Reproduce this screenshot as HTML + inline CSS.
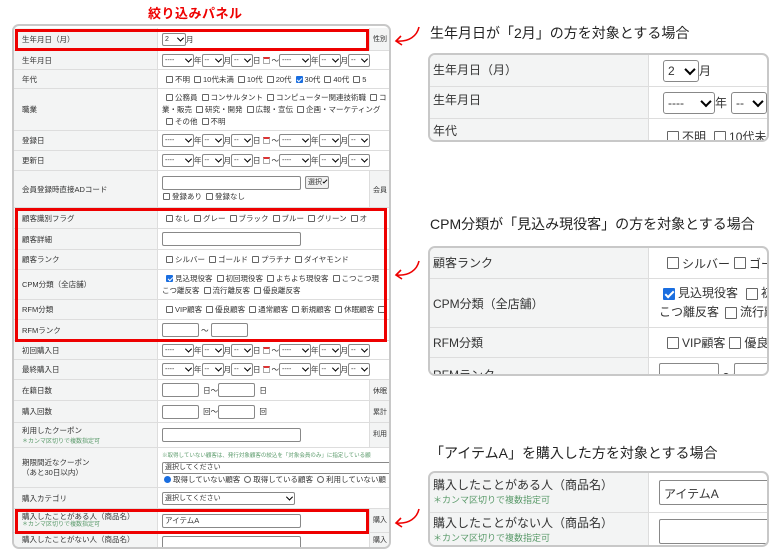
<!DOCTYPE html>
<html><head><meta charset="utf-8">
<style>
*{box-sizing:border-box;margin:0;padding:0}
body{width:780px;height:552px;background:#fff;position:relative;overflow:hidden;font-family:"Liberation Sans","Noto Sans CJK JP",sans-serif;color:#333}
.abs{position:absolute}
.panel{position:absolute;border:2px solid #c8c8c8;border-radius:7px;overflow:hidden;background:#fff}
.row{position:absolute;left:0;right:0;border-bottom:1px solid #ddd;display:flex}
.lab{background:#f3f4f4;border-right:1px solid #ddd;height:100%;display:flex;flex-direction:column;justify-content:center;flex:none}
.val{flex:1;display:flex;flex-direction:column;justify-content:center;overflow:hidden;white-space:nowrap}
.L .lab{width:144px;padding-left:8px;font-size:7.5px}
.L .val{padding-left:4px;font-size:7.5px}
.line{display:flex;align-items:center;white-space:nowrap}
.sel{display:inline-flex;align-items:center;justify-content:space-between;border:1px solid #888;border-radius:2px;background:#fff;height:13px;padding:0 2px;font-size:7px;flex:none}
.sel:after{content:"";width:4px;height:4px;border-right:1.3px solid #000;border-bottom:1.3px solid #000;transform:rotate(45deg) translate(-1px,-1px);margin-left:2px}
.inp{display:inline-block;border:1px solid #888;border-radius:2px;background:#fff;height:14px;flex:none}
.cb{display:inline-block;width:7px;height:7px;border:1px solid #666;border-radius:1px;margin:0 2px 0 4px;flex:none;vertical-align:middle}
.cb.on{background:#1a6ee0;border-color:#1a6ee0;position:relative}
.cb.on:after{content:"";position:absolute;left:1.5px;top:0;width:2px;height:4px;border-right:1.2px solid #fff;border-bottom:1.2px solid #fff;transform:rotate(45deg)}
.cal{display:inline-block;width:7px;height:7px;border:1px solid #aaa;border-top:2px solid #d33;margin:0 2px;flex:none}
.note{color:#5a9a6a;font-size:6px}
.red{position:absolute;border:3px solid #e00}
.R .lab{width:219px;padding-left:3px;font-size:12px}
.R .val{padding-left:14px;font-size:12px}
.R .sel{height:22px;font-size:12px;padding:0 4px;border-radius:3px}
.R .sel:after{width:6px;height:6px;border-width:2px}
.R .cb{width:12px;height:12px;margin:0 3px 0 4px}
.R .cb.on:after{left:3px;top:0;width:3px;height:7px;border-width:2px}
.title{position:absolute;font-size:14px;color:#222;white-space:nowrap}
.sc{position:absolute;right:0;top:0;bottom:0;width:20px;background:#f3f4f4;border-left:1px solid #ddd;font-size:7px;padding:6px 0 0 3px;overflow:hidden;white-space:nowrap}
</style></head><body>

<div class="abs" style="left:148px;top:3px;color:#e00;font-weight:bold;font-size:13px;letter-spacing:0.5px">絞り込みパネル</div>

<div class="panel L" style="left:12px;top:24px;width:379px;height:525px">
<div class="row" style="top:2px;height:23px"><div class="lab">生年月日（月）</div><div class="val"><div class="line"><span class="sel" style="width:24px">2</span>月</div></div><div class="sc">性別</div></div>
<div class="row" style="top:25px;height:19px"><div class="lab">生年月日</div><div class="val"><div class="line"><span class="sel" style="width:32px">----</span>年<span class="sel" style="width:22px">--</span>月<span class="sel" style="width:22px">--</span>日<span class="cal"></span>～<span class="sel" style="width:32px">----</span>年<span class="sel" style="width:22px">--</span>月<span class="sel" style="width:22px">--</span></div></div></div>
<div class="row" style="top:44px;height:19px"><div class="lab">年代</div><div class="val"><div class="line"><span class="cb"></span>不明<span class="cb"></span>10代未満<span class="cb"></span>10代<span class="cb"></span>20代<span class="cb on"></span>30代<span class="cb"></span>40代<span class="cb"></span>5</div></div></div>
<div class="row" style="top:63px;height:42px"><div class="lab">職業</div><div class="val" style="line-height:12px"><div class="line"><span class="cb"></span>公務員<span class="cb"></span>コンサルタント<span class="cb"></span>コンピューター関連技術職<span class="cb"></span>コ</div><div class="line">業・販売<span class="cb"></span>研究・開発<span class="cb"></span>広報・宣伝<span class="cb"></span>企画・マーケティング</div><div class="line"><span class="cb"></span>その他<span class="cb"></span>不明</div></div></div>
<div class="row" style="top:105px;height:20px"><div class="lab">登録日</div><div class="val"><div class="line"><span class="sel" style="width:32px">----</span>年<span class="sel" style="width:22px">--</span>月<span class="sel" style="width:22px">--</span>日<span class="cal"></span>～<span class="sel" style="width:32px">----</span>年<span class="sel" style="width:22px">--</span>月<span class="sel" style="width:22px">--</span></div></div></div>
<div class="row" style="top:125px;height:20px"><div class="lab">更新日</div><div class="val"><div class="line"><span class="sel" style="width:32px">----</span>年<span class="sel" style="width:22px">--</span>月<span class="sel" style="width:22px">--</span>日<span class="cal"></span>～<span class="sel" style="width:32px">----</span>年<span class="sel" style="width:22px">--</span>月<span class="sel" style="width:22px">--</span></div></div></div>
<div class="row" style="top:145px;height:37px"><div class="lab">会員登録時直接ADコード</div><div class="val" style="line-height:13px"><div class="line"><span class="inp" style="width:139px"></span><span class="sel" style="width:24px;margin-left:4px;background:#f0f0f0;justify-content:center">選択</span></div><div class="line"><span class="cb" style="margin-left:1px"></span>登録あり<span class="cb"></span>登録なし</div></div><div class="sc" style="width:20px;padding-top:14px">会員</div></div>
<div class="row" style="top:182px;height:21px"><div class="lab">顧客識別フラグ</div><div class="val"><div class="line"><span class="cb"></span>なし<span class="cb"></span>グレー<span class="cb"></span>ブラック<span class="cb"></span>ブルー<span class="cb"></span>グリーン<span class="cb"></span>オ</div></div></div>
<div class="row" style="top:203px;height:21px"><div class="lab">顧客詳細</div><div class="val"><span class="inp" style="width:139px"></span></div></div>
<div class="row" style="top:224px;height:20px"><div class="lab">顧客ランク</div><div class="val"><div class="line"><span class="cb"></span>シルバー<span class="cb"></span>ゴールド<span class="cb"></span>プラチナ<span class="cb"></span>ダイヤモンド</div></div></div>
<div class="row" style="top:244px;height:30px"><div class="lab">CPM分類（全店舗）</div><div class="val" style="line-height:12px"><div class="line"><span class="cb on"></span>見込現役客<span class="cb"></span>初回現役客<span class="cb"></span>よちよち現役客<span class="cb"></span>こつこつ現</div><div class="line">こつ離反客<span class="cb"></span>流行離反客<span class="cb"></span>優良離反客</div></div></div>
<div class="row" style="top:274px;height:20px"><div class="lab">RFM分類</div><div class="val"><div class="line"><span class="cb"></span>VIP顧客<span class="cb"></span>優良顧客<span class="cb"></span>通常顧客<span class="cb"></span>新規顧客<span class="cb"></span>休眠顧客<span class="cb"></span></div></div></div>
<div class="row" style="top:294px;height:21px"><div class="lab">RFMランク</div><div class="val"><div class="line"><span class="inp" style="width:37px"></span>&nbsp;～&nbsp;<span class="inp" style="width:37px"></span></div></div></div>
<div class="row" style="top:315px;height:19px"><div class="lab">初回購入日</div><div class="val"><div class="line"><span class="sel" style="width:32px">----</span>年<span class="sel" style="width:22px">--</span>月<span class="sel" style="width:22px">--</span>日<span class="cal"></span>～<span class="sel" style="width:32px">----</span>年<span class="sel" style="width:22px">--</span>月<span class="sel" style="width:22px">--</span></div></div></div>
<div class="row" style="top:334px;height:20px"><div class="lab">最終購入日</div><div class="val"><div class="line"><span class="sel" style="width:32px">----</span>年<span class="sel" style="width:22px">--</span>月<span class="sel" style="width:22px">--</span>日<span class="cal"></span>～<span class="sel" style="width:32px">----</span>年<span class="sel" style="width:22px">--</span>月<span class="sel" style="width:22px">--</span></div></div></div>
<div class="row" style="top:354px;height:21px"><div class="lab">在籍日数</div><div class="val"><div class="line"><span class="inp" style="width:37px"></span>&nbsp;&nbsp;日～<span class="inp" style="width:37px"></span>&nbsp;&nbsp;日</div></div><div class="sc">休眠</div></div>
<div class="row" style="top:375px;height:22px"><div class="lab">購入回数</div><div class="val"><div class="line"><span class="inp" style="width:37px"></span>&nbsp;&nbsp;回～<span class="inp" style="width:37px"></span>&nbsp;&nbsp;回</div></div><div class="sc">累計</div></div>
<div class="row" style="top:397px;height:25px"><div class="lab">利用したクーポン<span class="note">＊カンマ区切りで複数指定可</span></div><div class="val"><span class="inp" style="width:139px"></span></div><div class="sc">利用</div></div>
<div class="row" style="top:422px;height:40px"><div class="lab" style="line-height:10px">期限間近なクーポン<br>（あと30日以内）</div><div class="val" style="line-height:12px"><div class="note" style="font-size:5.5px">※取得していない顧客は、発行対象顧客の絞込を「対象会員のみ」に指定している顧</div><div class="line"><span class="inp" style="width:240px;height:12px;font-size:7px;padding-left:2px;line-height:10px">選択してください</span></div><div class="line"><span class="cb" style="border-radius:50%;background:#1a6ee0;border-color:#1a6ee0;margin-left:2px"></span>取得していない顧客<span class="cb" style="border-radius:50%"></span>取得している顧客<span class="cb" style="border-radius:50%"></span>利用していない顧</div></div></div>
<div class="row" style="top:462px;height:21px"><div class="lab">購入カテゴリ</div><div class="val"><span class="sel" style="width:133px">選択してください</span></div></div>
<div class="row" style="top:483px;height:24px"><div class="lab" style="line-height:9px">購入したことがある人（商品名）<span class="note">＊カンマ区切りで複数指定可</span></div><div class="val"><div class="line" style="font-size:7.5px"><span class="inp" style="width:139px;padding-left:2px;line-height:12px">アイテムA</span></div></div><div class="sc">購入</div></div>
<div class="row" style="top:507px;height:20px"><div class="lab" style="justify-content:flex-start;padding-top:1px">購入したことがない人（商品名）</div><div class="val" style="justify-content:flex-start;padding-top:3px"><span class="inp" style="width:139px"></span></div><div class="sc" style="padding-top:2px">購入</div></div>
</div>

<div class="red" style="left:15px;top:29px;width:354px;height:22px"></div>
<div class="red" style="left:15px;top:208px;width:372px;height:134px"></div>
<div class="red" style="left:15px;top:509px;width:354px;height:25px"></div>

<svg class="abs" style="left:393px;top:24px" width="30" height="24"><path d="M26 3 C24 12 16 18 4 17 M8 12 L3 17 L9 21" fill="none" stroke="#e00" stroke-width="1.6"/></svg>
<svg class="abs" style="left:393px;top:258px" width="30" height="24"><path d="M26 3 C24 12 16 18 4 17 M8 12 L3 17 L9 21" fill="none" stroke="#e00" stroke-width="1.6"/></svg>
<svg class="abs" style="left:393px;top:506px" width="30" height="24"><path d="M26 3 C24 12 16 18 4 17 M8 12 L3 17 L9 21" fill="none" stroke="#e00" stroke-width="1.6"/></svg>

<div class="title" style="left:430px;top:23px">生年月日が「2月」の方を対象とする場合</div>
<div class="panel R" style="left:428px;top:53px;width:341px;height:89px">
<div class="row" style="top:0;height:32px"><div class="lab" style="justify-content:flex-start;padding-top:6px">生年月日（月）</div><div class="val"><div class="line"><span class="sel" style="width:36px">2</span>月</div></div></div>
<div class="row" style="top:32px;height:32px"><div class="lab" style="justify-content:flex-start;padding-top:4px">生年月日</div><div class="val"><div class="line"><span class="sel" style="width:52px">----</span>年<span class="sel" style="width:36px;margin-left:4px">--</span>月</div></div></div>
<div class="row" style="top:64px;height:30px;border:0"><div class="lab" style="justify-content:flex-start;padding-top:3px">年代</div><div class="val" style="justify-content:flex-start;padding-top:9px"><div class="line"><span class="cb"></span>不明 <span class="cb" style="margin-left:8px"></span>10代未満</div></div></div>
</div>

<div class="title" style="left:430px;top:214px">CPM分類が「見込み現役客」の方を対象とする場合</div>
<div class="panel R" style="left:428px;top:246px;width:341px;height:130px">
<div class="row" style="top:0;height:31px"><div class="lab" style="justify-content:flex-start;padding-top:6px">顧客ランク</div><div class="val"><div class="line"><span class="cb"></span>シルバー<span class="cb"></span>ゴールド</div></div></div>
<div class="row" style="top:31px;height:49px"><div class="lab">CPM分類（全店舗）</div><div class="val" style="line-height:19px;padding-left:10px"><div class="line"><span class="cb on"></span>見込現役客 <span class="cb" style="margin-left:8px"></span>初回</div><div class="line">こつ離反客 <span class="cb" style="margin-left:6px"></span>流行離反客</div></div></div>
<div class="row" style="top:80px;height:30px"><div class="lab">RFM分類</div><div class="val"><div class="line"><span class="cb"></span>VIP顧客 <span class="cb" style="margin-left:4px"></span>優良顧客</div></div></div>
<div class="row" style="top:110px;height:30px;border:0"><div class="lab" style="justify-content:flex-start;padding-top:8px">RFMランク</div><div class="val" style="justify-content:flex-start;padding-top:5px;padding-left:10px"><div class="line"><span class="inp" style="width:60px;height:22px"></span>&nbsp;～<span class="inp" style="width:60px;height:22px"></span></div></div></div>
</div>

<div class="title" style="left:430px;top:443px">「アイテムA」を購入した方を対象とする場合</div>
<div class="panel R" style="left:428px;top:471px;width:341px;height:76px">
<div class="row" style="top:0;height:40px"><div class="lab" style="line-height:15px">購入したことがある人（商品名）<span class="note" style="font-size:9px">＊カンマ区切りで複数指定可</span></div><div class="val" style="padding-left:10px"><span class="inp" style="width:130px;height:25px;padding:4px 4px;font-size:12px">アイテムA</span></div></div>
<div class="row" style="top:40px;height:36px;border:0"><div class="lab" style="line-height:15px">購入したことがない人（商品名）<span class="note" style="font-size:9px">＊カンマ区切りで複数指定可</span></div><div class="val" style="padding-left:10px"><span class="inp" style="width:130px;height:25px"></span></div></div>
</div>
</body></html>
